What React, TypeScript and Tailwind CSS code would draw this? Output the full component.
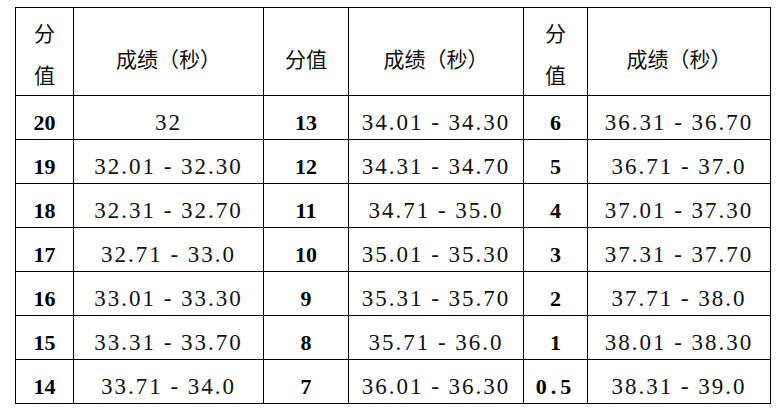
const rows: [string, string, string, string, string, string][] = [
  ["20", "32", "13", "34.01 - 34.30", "6", "36.31 - 36.70"],
  ["19", "32.01 - 32.30", "12", "34.31 - 34.70", "5", "36.71 - 37.0"],
  ["18", "32.31 - 32.70", "11", "34.71 - 35.0", "4", "37.01 - 37.30"],
  ["17", "32.71 - 33.0", "10", "35.01 - 35.30", "3", "37.31 - 37.70"],
  ["16", "33.01 - 33.30", "9", "35.31 - 35.70", "2", "37.71 - 38.0"],
  ["15", "33.31 - 33.70", "8", "35.71 - 36.0", "1", "38.01 - 38.30"],
  ["14", "33.71 - 34.0", "7", "36.01 - 36.30", "0.5", "38.31 - 39.0"],
];

const cjk = "font-['Noto_Sans_CJK_SC',sans-serif] text-[21px] font-normal text-[#111]";
const cell = "border border-black p-0 text-center align-middle";
const stacked = `${cell} ${cjk} pt-[3px] leading-[42px]`;
const single = `${cell} ${cjk} pt-[12px] leading-[30px]`;
const score = `${cell} pt-[10px] font-['Liberation_Serif',serif] text-[22px] leading-[30px] font-bold text-black`;
const time = `${cell} pt-[10px] font-['Liberation_Serif',serif] text-[23px] leading-[30px] tracking-[2px] text-[#111]`;

const App = () => {
  return (
    <div className="min-h-screen bg-white pl-[15px] pt-[7px]">
      <table className="table-fixed border-collapse">
        <colgroup>
          <col className="w-[58px]" />
          <col className="w-[190px]" />
          <col className="w-[85px]" />
          <col className="w-[175px]" />
          <col className="w-[64px]" />
          <col className="w-[183px]" />
        </colgroup>
        <thead>
          <tr className="h-[87px]">
            <th className={stacked}>
              分<br />值
            </th>
            <th className={single}>成绩（秒）</th>
            <th className={single}>分值</th>
            <th className={single}>成绩（秒）</th>
            <th className={stacked}>
              分<br />值
            </th>
            <th className={single}>成绩（秒）</th>
          </tr>
        </thead>
        <tbody>
          {rows.map((r) => (
            <tr key={r[0]} className="h-[44px]">
              {r.map((v, i) => (
                <td
                  key={i}
                  className={
                    i % 2 === 0
                      ? `${score} ${v.includes(".") ? "tracking-[4px]" : ""}`
                      : time
                  }
                >
                  {v}
                </td>
              ))}
            </tr>
          ))}
        </tbody>
      </table>
    </div>
  );
};

export default App;
